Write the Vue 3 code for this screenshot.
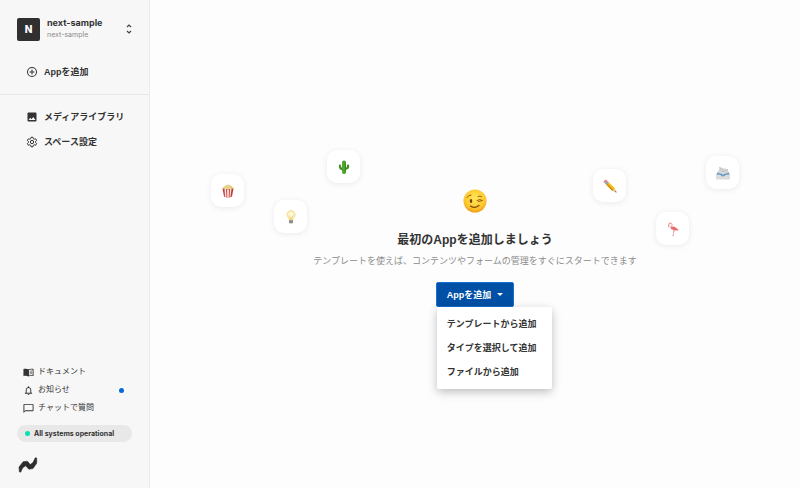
<script setup>
import { ref } from 'vue'

const menuOpen = ref(true)
const menuItems = ['テンプレートから追加', 'タイプを選択して追加', 'ファイルから追加']

// Offsets of the decorative tiles: x from the centre line, y from the top of the hero.
const tiles = [
  { icon: 'popcorn', x: -264, y: -15 },
  { icon: 'bulb', x: -201, y: 11 },
  { icon: 'cactus', x: -148, y: -39 },
  { icon: 'pencil', x: 118, y: -20 },
  { icon: 'flamingo', x: 181, y: 23 },
  { icon: 'envelope', x: 231, y: -33 },
]
</script>

<template>
  <div class="app">
    <aside class="sidebar">
      <button class="workspace" type="button">
        <span class="avatar">N</span>
        <span class="names">
          <span class="name">next-sample</span>
          <span class="slug">next-sample</span>
        </span>
        <svg class="updown" viewBox="0 0 8 12" aria-hidden="true">
          <path d="M2 4 4 2l2 2M2 8l2 2 2-2" fill="none" stroke="#444" stroke-width="1.2" />
        </svg>
      </button>

      <nav class="nav add">
        <a class="item" href="#add">
          <svg class="icon" viewBox="0 0 24 24" aria-hidden="true">
            <path d="M13 7h-2v4H7v2h4v4h2v-4h4v-2h-4V7zm-1-5a10 10 0 1 0 0 20 10 10 0 0 0 0-20zm0 18a8 8 0 1 1 0-16 8 8 0 0 1 0 16z" />
          </svg>
          Appを追加
        </a>
      </nav>

      <nav class="nav main-nav">
        <a class="item" href="#media">
          <svg class="icon" viewBox="0 0 24 24" aria-hidden="true">
            <path d="M21 19V5a2 2 0 0 0-2-2H5a2 2 0 0 0-2 2v14a2 2 0 0 0 2 2h14a2 2 0 0 0 2-2zM8.500 13.500l2.500 3 3.500-4.500 4.500 6H5l3.500-4.500z" />
          </svg>
          メディアライブラリ
        </a>
        <a class="item" href="#settings">
          <svg class="icon outline" viewBox="0 0 24 24" aria-hidden="true">
            <path d="M10 2.500h4l.6 2.900 1.900 1.100 2.800-1 2 3.500-2.200 1.900v2.200l2.200 1.900-2 3.500-2.800-1-1.900 1.100-.6 2.900h-4l-.6-2.900-1.900-1.100-2.800 1-2-3.500 2.200-1.900v-2.200L2.700 9l2-3.500 2.800 1 1.900-1.100z" />
            <circle cx="12" cy="12" r="3.300" />
          </svg>
          スペース設定
        </a>
      </nav>

      <div class="bottom">
        <a class="sub" href="#docs">
          <svg class="sub-icon" viewBox="0 0 24 24" aria-hidden="true">
            <path d="M12 5C9.500 3.500 4 3 1 4.500V20c3-1.200 8-1.200 11 .6 3-1.800 8-1.800 11-.6V4.500C20 3 14.500 3.500 12 5zm9 13c-2.500-.6-5.500-.3-8 .8V6.800c2.200-1.300 5.500-1.500 8-.9V18z" />
            <path d="M14.500 9.500q2.500-1 5-.6M14.500 12.300q2.500-1 5-.6M14.500 15.100q2.500-1 5-.6" fill="none" stroke="#333" stroke-width="1.300" />
          </svg>
          ドキュメント
        </a>
        <a class="sub" href="#news">
          <svg class="sub-icon" viewBox="0 0 24 24" aria-hidden="true">
            <path d="M12 22a2 2 0 0 0 2-2h-4c0 1.100.9 2 2 2zm6-6v-5c0-3.070-1.630-5.640-4.500-6.320V4a1.500 1.500 0 0 0-3 0v.68C7.640 5.360 6 7.920 6 11v5l-2 2v1h16v-1l-2-2zm-2 1H8v-6c0-2.480 1.510-4.500 4-4.500s4 2.020 4 4.500v6z" />
          </svg>
          お知らせ
          <span class="unread"></span>
        </a>
        <a class="sub" href="#chat">
          <svg class="sub-icon" viewBox="0 0 24 24" aria-hidden="true">
            <path d="M21 2H3a2 2 0 0 0-2 2v18l4-4h16a2 2 0 0 0 2-2V4a2 2 0 0 0-2-2zm0 14H5l-2 2V4h18v12z" />
          </svg>
          チャットで質問
        </a>
        <a class="status" href="#status"><span class="dot"></span>All systems operational</a>
        <svg class="logo" viewBox="0 0 20 16" aria-hidden="true">
          <path d="M1 10 5.200 4.700 9.300 4.200 12.300 7.600 15 5.500 17.300.8 18.700 1 18.700 6.200 15 11.500 10.800 12.200 7.700 8.800 4.500 11 2.700 15.200 1.400 14.800z" fill="#2d2d2d" stroke="#2d2d2d" stroke-width=".6" stroke-linejoin="round" />
        </svg>
      </div>
    </aside>

    <main class="main">
      <section class="hero">
        <div
          v-for="tile in tiles"
          :key="tile.icon"
          class="tile"
          :style="{ left: `calc(50% + ${tile.x}px)`, top: `${tile.y}px` }"
          aria-hidden="true"
        >
          <svg v-if="tile.icon === 'popcorn'" viewBox="0 0 28 28">
            <path d="M4 10Q2 6 7 5 8 2 12 2q3-2 6 1 4-1 5 3 4 2 1 5z" fill="#ead58c" />
            <path d="M7 6q3-3 5 1 3-4 6-1 3-1 4 3" fill="none" stroke="#dcbf6c" stroke-width="1.200" />
            <path d="M3 9q11 3 22 0l-3 16q-8 4-16 0z" fill="#c93835" />
            <path d="m7 10 3 0 1 16-3-1zM12 11h4l-.5 16h-3zM18 10h3l-2 15-2 1z" fill="#f5e3dd" />
          </svg>
          <svg v-else-if="tile.icon === 'bulb'" viewBox="0 0 28 28">
            <path d="M14 1a8.500 8.500 0 0 0-8.500 8.500C5.500 14 10 15 10 20h8c0-5 4.500-6 4.500-10.500A8.500 8.500 0 0 0 14 1z" fill="#f9e9a8" stroke="#ead27f" />
            <circle cx="14" cy="9" r="5" fill="#fffbe0" />
            <path d="m11 10 2 9h2l2-9" fill="none" stroke="#e6c65c" />
            <path d="M10 20h8v5l-2 2h-4l-2-2z" fill="#a5a5a1" />
            <path d="M10 22h8M10 24.500h8" stroke="#686866" />
          </svg>
          <svg v-else-if="tile.icon === 'cactus'" viewBox="0 0 28 28">
            <path d="M6 11v3q0 4 8 5M22 11v3q0 3-8 4" fill="none" stroke="#3f8f25" stroke-width="4.500" stroke-linecap="round" />
            <path d="M14 5v19" stroke="#49a02b" stroke-width="8" stroke-linecap="round" />
            <path d="M12 4v21M6 11v3" stroke="#6db545" stroke-width="1" />
            <path d="M17 5v20" stroke="#2e7a1c" stroke-width="1" />
          </svg>
          <svg v-else-if="tile.icon === 'pencil'" viewBox="0 0 28 28">
            <path d="M1 6q0-4 5-5l3 3-5 5z" fill="#e78691" />
            <path d="m4 9 5-5 3 3-5 5z" fill="#8fa0a5" />
            <path d="m7 12 5-5 12 12-5 5z" fill="#f5ba17" />
            <path d="m7 12 2-2 12 12-2 2z" fill="#d28b0b" />
            <path d="m19 24 5-5 3 8z" fill="#e9c68d" />
            <path d="m24 26 2-2 1 3z" fill="#333" />
          </svg>
          <svg v-else-if="tile.icon === 'flamingo'" viewBox="0 0 28 28">
            <path d="M15 16v11h-3M19 15l-4 6" fill="none" stroke="#d08583" stroke-width="1.200" />
            <path d="M6 7Q5 2 8 2t4 3q0 3-2 4t1 3" fill="none" stroke="#ee8583" stroke-width="2" />
            <path d="M9 11q4-3 9-1l7 6-1 1q-7 0-12-2-3-1-3-4z" fill="#ef6d6d" />
            <path d="m13 11 10 5" stroke="#d2535a" />
            <path d="m5 5 2 4-2 1z" fill="#777" />
          </svg>
          <svg v-else viewBox="0 0 28 28">
            <path d="m1 15 4-5h19l3 5v11H1z" fill="#b7c3cc" />
            <path d="m4 16 3-14 17 5-1 11z" fill="#d5d7d7" />
            <path d="m7 2 6 9 11-4" fill="none" stroke="#a9adaf" stroke-width="1.200" />
            <path d="M2 15h6l6 3 6-3h6v4H2z" fill="#287dbe" />
            <path d="M1 17h8q1 5 5 5t5-5h8v10H1z" fill="#dcdcd9" />
          </svg>
        </div>

        <svg class="wink" viewBox="0 0 48 48" aria-hidden="true">
          <defs>
            <radialGradient id="face" cx="50%" cy="38%" r="63%">
              <stop offset="0" stop-color="#ffe75a" />
              <stop offset=".7" stop-color="#fdc82d" />
              <stop offset="1" stop-color="#f19a16" />
            </radialGradient>
          </defs>
          <circle cx="24" cy="24" r="23" fill="url(#face)" />
          <path d="M8 17q3-5 8-5" fill="none" stroke="#99580c" stroke-width="2" stroke-linecap="round" />
          <ellipse cx="16" cy="24" rx="2.500" ry="4" fill="#774009" />
          <path d="M28 23q5-4 11 0l-8 2M30 15q4-2 7 0" fill="none" stroke="#99580c" stroke-width="2" stroke-linecap="round" stroke-linejoin="round" />
          <path d="M15 34q8 6 17-1" fill="none" stroke="#854a0b" stroke-width="2.500" stroke-linecap="round" />
        </svg>
        <h1 class="title">最初のAppを追加しましょう</h1>
        <p class="lead">テンプレートを使えば、コンテンツやフォームの管理をすぐにスタートできます</p>

        <div class="dropdown">
          <button class="primary" type="button" :aria-expanded="menuOpen" @click="menuOpen = !menuOpen">
            Appを追加
            <span class="caret"></span>
          </button>
          <div v-if="menuOpen" class="menu">
            <button v-for="item in menuItems" :key="item" class="menu-item" type="button">{{ item }}</button>
          </div>
        </div>
      </section>
    </main>
  </div>
</template>

<style>
body {
  margin: 0;
  background: #fdfdfd;
}
</style>

<style scoped>
.app {
  display: flex;
  min-height: 100vh;
  color: #333;
  font-family: "Liberation Sans", "Noto Sans CJK JP", sans-serif;
  font-size: 9px;
  line-height: 12px;
}
a {
  color: inherit;
  text-decoration: none;
}
button {
  border: 0;
  background: none;
  padding: 0;
  font: inherit;
  color: inherit;
  cursor: pointer;
}
.sidebar {
  box-sizing: border-box;
  flex: 0 0 150px;
  display: flex;
  flex-direction: column;
  border-right: 1px solid #ebebeb;
  background: #f7f7f7;
}
.workspace {
  display: flex;
  align-items: center;
  gap: 7px;
  padding: 17px 16px 17px 17px;
  text-align: left;
  font-family: Inter, sans-serif;
}
.avatar {
  display: grid;
  place-items: center;
  width: 23px;
  height: 23px;
  border-radius: 2px;
  background: #303030;
  color: #fff;
  font-size: 10px;
  font-weight: 800;
}
.names {
  flex: 1;
  display: flex;
  flex-direction: column;
}
.name {
  font-weight: 700;
}
.slug {
  font-size: 7px;
  color: #8a8a8a;
}
.updown {
  width: 8px;
  height: 12px;
}
.nav {
  display: flex;
  flex-direction: column;
}
.add {
  padding: 1px 0 10px;
  border-bottom: 1px solid #e7e7e7;
}
.main-nav {
  padding-top: 9px;
}
.item {
  display: flex;
  align-items: center;
  gap: 6px;
  height: 25px;
  padding-left: 26px;
  font-weight: 700;
}
.icon {
  width: 12px;
  height: 12px;
  fill: #333;
}
.outline {
  fill: none;
  stroke: #333;
  stroke-width: 2;
  stroke-linejoin: round;
}
.bottom {
  display: flex;
  flex-direction: column;
  margin-top: auto;
  padding: 0 17px 15px;
}
.sub {
  display: flex;
  align-items: center;
  gap: 4px;
  height: 18px;
  padding: 0 8px 0 6px;
  font-size: 8px;
}
.sub-icon {
  width: 11px;
  height: 11px;
  fill: #333;
}
.unread {
  width: 5px;
  height: 5px;
  margin-left: auto;
  border-radius: 50%;
  background: #0869d3;
}
.status {
  display: flex;
  align-items: center;
  gap: 4px;
  height: 17px;
  margin: 8px 0 15px;
  padding-left: 8px;
  border-radius: 9px;
  background: #e8e8e8;
  font-family: Inter, sans-serif;
  font-size: 7px;
  font-weight: 700;
}
.dot {
  width: 5px;
  height: 5px;
  border-radius: 50%;
  background: #06dfb4;
}
.logo {
  width: 20px;
  height: 16px;
  margin-left: 1px;
}
.main {
  flex: 1;
  display: flex;
  align-items: center;
  padding-top: 8px;
}
.hero {
  position: relative;
  flex: 1;
  display: flex;
  flex-direction: column;
  align-items: center;
}
.tile {
  position: absolute;
  display: grid;
  place-items: center;
  width: 33px;
  height: 33px;
  border-radius: 10px;
  background: #fff;
  box-shadow: 0 1px 6px rgba(0, 0, 0, 0.08);
}
.tile svg {
  width: 14px;
  height: 14px;
}
.wink {
  width: 24px;
  height: 24px;
}
.title {
  margin: 18px 0 6px;
  font-size: 12px;
  line-height: 18px;
  font-weight: 700;
}
.lead {
  margin: 0 0 15px;
  color: #8c8c8c;
}
.dropdown {
  position: relative;
}
.primary {
  display: flex;
  align-items: center;
  gap: 6px;
  height: 25px;
  padding: 0 10px;
  border: 1px solid #1670d0;
  border-radius: 2px;
  background: #0050a5;
  color: #fff;
  font-weight: 700;
}
.caret {
  border: 3px solid transparent;
  border-top-color: #fff;
  border-bottom: 0;
}
.menu {
  position: absolute;
  top: 100%;
  left: 1px;
  display: flex;
  flex-direction: column;
  padding: 5px 0;
  border-radius: 2px;
  background: #fff;
  box-shadow: 0 3px 10px rgba(0, 0, 0, 0.25);
}
.menu-item {
  height: 24px;
  padding: 0 16px 0 10px;
  text-align: left;
  white-space: nowrap;
  font-weight: 700;
}
</style>
